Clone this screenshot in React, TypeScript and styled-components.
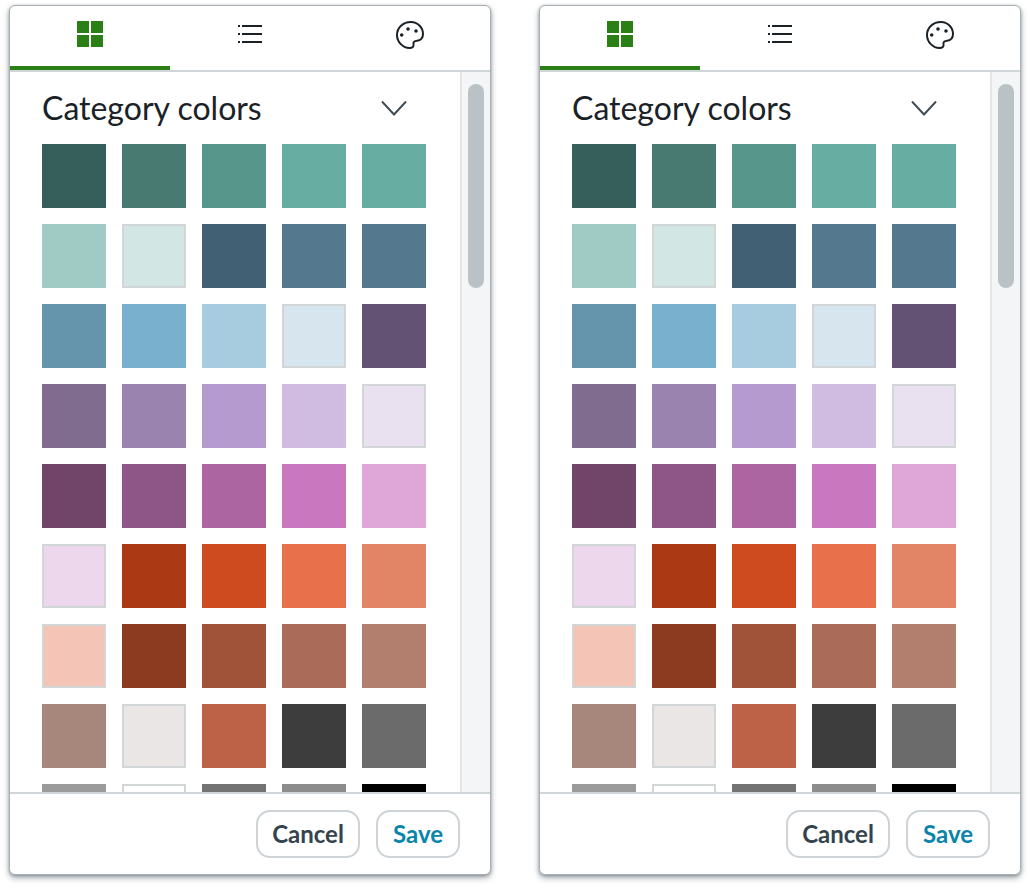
import React from "react";
import styled, { createGlobalStyle } from "styled-components";

const Global = createGlobalStyle`
  html, body { margin: 0; padding: 0; background: #fff; overflow: hidden; }
  body { font-family: Lato, "Liberation Sans", sans-serif; }
`;

const Page = styled.div`
  display: flex;
  gap: 48px;
  padding: 5px 0 0 9px;
  width: 1030px;
  height: 888px;
  box-sizing: border-box;
`;

const Card = styled.section`
  width: 482px;
  height: 870px;
  box-sizing: border-box;
  display: flex;
  flex-direction: column;
  background: #fff;
  border: 1px solid #a9b0b4;
  border-radius: 6px;
  box-shadow: 0 3px 6px rgba(45, 59, 69, 0.4), 0 1px 3px rgba(45, 59, 69, 0.35);
  overflow: hidden;
`;

const Tabs = styled.div`
  display: grid;
  grid-template-columns: repeat(3, 160px);
  flex: none;
  height: 66px;
  box-sizing: border-box;
  border-bottom: 2px solid #d0d5d8;
`;

const Tab = styled.div<{ $active?: boolean }>`
  display: flex;
  justify-content: center;
  align-items: flex-start;
  padding-top: 15px;
  height: 64px;
  box-sizing: border-box;
  border-bottom: 4px solid ${(p) => (p.$active ? "#2a8015" : "transparent")};
`;

const Middle = styled.div`
  flex: 1;
  min-height: 0;
  display: flex;
`;

const Content = styled.div`
  flex: 1;
  min-width: 0;
  overflow: hidden;
  padding: 17px 0 0 32px;
`;

const Heading = styled.div`
  display: flex;
  align-items: center;
  justify-content: space-between;
  width: 368px;
  height: 40px;
  margin-bottom: 15px;
`;

const Title = styled.h2`
  margin: 0;
  padding-bottom: 2px;
  font-size: 32px;
  font-weight: 400;
  line-height: 38px;
  color: #1a2228;
`;

const Swatches = styled.div`
  display: grid;
  grid-template-columns: repeat(5, 64px);
  grid-auto-rows: 64px;
  gap: 16px;
`;

const Swatch = styled.div<{ $color: string; $outlined?: boolean }>`
  box-sizing: border-box;
  background: ${(p) => p.$color};
  border: ${(p) => (p.$outlined ? "2px solid #d3d6d7" : "none")};
`;

const Track = styled.div`
  flex: none;
  width: 30px;
  box-sizing: border-box;
  background: #f4f5f7;
  border-left: 2px solid #e4e7e9;
  padding: 12px 6px 0 6px;
`;

const Thumb = styled.div`
  width: 16px;
  height: 204px;
  border-radius: 8px;
  background: #bac2c5;
`;

const Footer = styled.div`
  flex: none;
  height: 82px;
  box-sizing: border-box;
  border-top: 2px solid #d0d5d8;
  display: flex;
  justify-content: flex-end;
  align-items: flex-start;
  gap: 16px;
  padding: 16px 30px 0 0;
`;

const Button = styled.button<{ $primary?: boolean }>`
  height: 48px;
  box-sizing: border-box;
  padding: 0 0 2px;
  width: ${(p) => (p.$primary ? 84 : 104)}px;
  border: 2px solid #cdd3d6;
  border-radius: 14px;
  background: #fff;
  font-family: Lato, "Liberation Sans", sans-serif;
  font-size: 24px;
  font-weight: 700;
  color: ${(p) => (p.$primary ? "#0a84a8" : "#34434d")};
`;

const ChevronIcon = styled.svg`
  margin-right: 3px;
`;

const rows: [string, boolean?][] = [
  ["#365e5b"], ["#487a71"], ["#57968a"], ["#68ada2"], ["#68ada2"],
  ["#a0cbc4"], ["#d2e7e3", true], ["#426073"], ["#54788d"], ["#54788d"],
  ["#6595ad"], ["#78b0cd"], ["#a8ccdf"], ["#d6e5ee", true], ["#635274"],
  ["#7f6c8f"], ["#9a83af"], ["#b59ad0"], ["#cfbce0"], ["#e9e0f0", true],
  ["#71446a"], ["#8e5587"], ["#ac65a0"], ["#c978bf"], ["#dea7d7"],
  ["#ecd7ec", true], ["#ab3a14"], ["#cd4b1f"], ["#e8704b"], ["#e28566"],
  ["#f4c4b6", true], ["#8d3b20"], ["#a15339"], ["#ab6b59"], ["#b27f6e"],
  ["#a7877c"], ["#e9e6e5", true], ["#bd6147"], ["#3d3d3d"], ["#6b6b6b"],
  ["#9b9b9b"], ["#ffffff", true], ["#737373"], ["#8c8c8c"], ["#000000"],
];

const GridIcon = () => (
  <svg width="26" height="26" viewBox="0 0 26 26" fill="#2a8015">
    <rect x="0" y="0" width="12" height="12" />
    <rect x="14" y="0" width="12" height="12" />
    <rect x="0" y="14" width="12" height="12" />
    <rect x="14" y="14" width="12" height="12" />
  </svg>
);

const ListIcon = () => (
  <svg width="24" height="26" viewBox="0 0 24 26" stroke="#1a2228" strokeWidth="2" fill="none">
    <path d="M4 5h20M4 13h20M4 21h20M0 5h2M0 13h2M0 21h2" />
  </svg>
);

const PaletteIcon = () => (
  <svg width="28" height="28" viewBox="0 0 28 28" fill="none">
    <path
      d="M15 1C7 1 1 6.500 1 14C1 21 7 27 13.500 27C16.500 27 18 25.500 17.500 23C17 21 18.500 20 21 19.800C25 19.400 27 16.500 27 13C27 6.500 21.500 1 15 1Z"
      stroke="#1a2228"
      strokeWidth="2"
    />
    <circle cx="5.700" cy="14" r="1.800" fill="#1a2228" />
    <circle cx="12" cy="8" r="1.800" fill="#1a2228" />
    <circle cx="20" cy="10" r="1.800" fill="#1a2228" />
  </svg>
);

const Chevron = () => (
  <ChevronIcon width="26" height="16" viewBox="0 0 26 16" fill="none">
    <path d="M1 0.500 13 13.500 25 0.500" stroke="#3d4c56" strokeWidth="2" />
  </ChevronIcon>
);

const Panel = () => (
  <Card>
    <Tabs>
      <Tab $active><GridIcon /></Tab>
      <Tab><ListIcon /></Tab>
      <Tab><PaletteIcon /></Tab>
    </Tabs>
    <Middle>
      <Content>
        <Heading>
          <Title>Category colors</Title>
          <Chevron />
        </Heading>
        <Swatches>
          {rows.map(([c, o], i) => (
            <Swatch key={i} $color={c} $outlined={o} />
          ))}
        </Swatches>
      </Content>
      <Track><Thumb /></Track>
    </Middle>
    <Footer>
      <Button>Cancel</Button>
      <Button $primary>Save</Button>
    </Footer>
  </Card>
);

export default function App() {
  return (
    <>
      <Global />
      <Page>
        <Panel />
        <Panel />
      </Page>
    </>
  );
}
